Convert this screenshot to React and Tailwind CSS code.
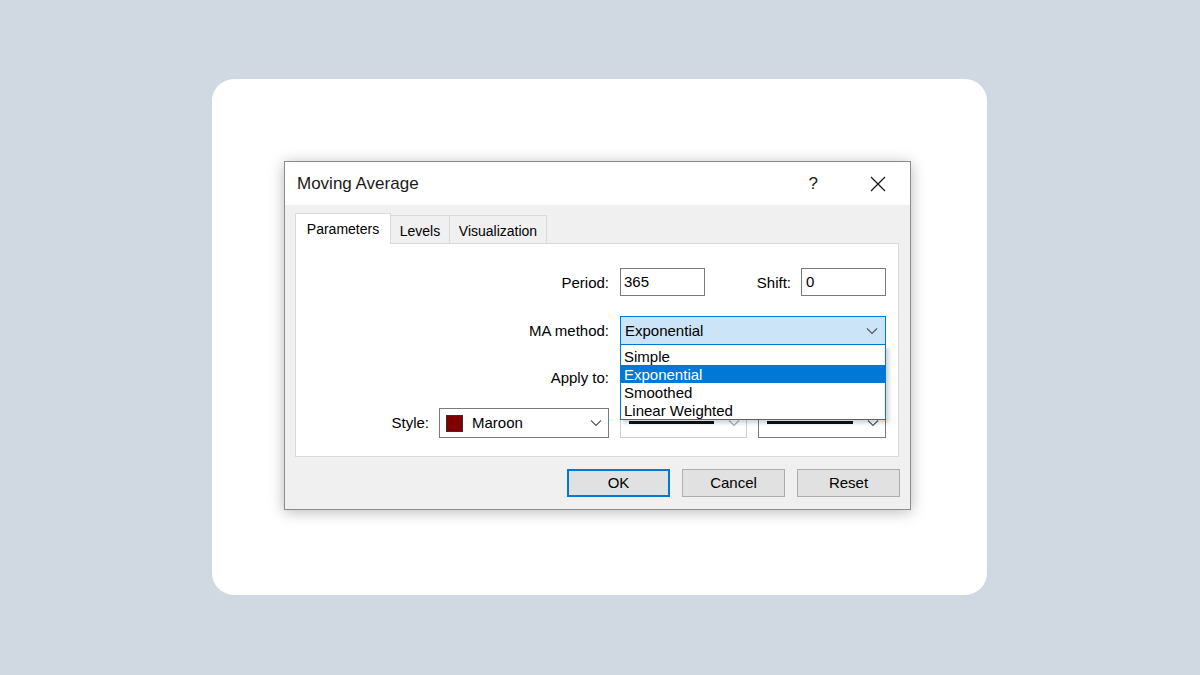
import React from "react";

const font = { fontFamily: '"Liberation Sans", Arial, sans-serif' };

const Chevron = ({ className = "" }) => (
  <svg width="12" height="8" viewBox="0 0 12 8" className={className}>
    <path d="M1 1.5 L6 6.5 L11 1.5" fill="none" stroke="currentColor" strokeWidth="1.1" />
  </svg>
);

const CloseIcon = () => (
  <svg width="16" height="16" viewBox="0 0 16 16">
    <path d="M1 1 L15 15 M15 1 L1 15" stroke="#1a1a1a" strokeWidth="1.3" fill="none" />
  </svg>
);

const options = ["Simple", "Exponential", "Smoothed", "Linear Weighted"];

export default function App() {
  return (
    <div className="w-full h-[675px] bg-[#d0d8e2] pt-[79px] pl-[212px] text-black" style={font}>
      <div className="w-[775px] h-[516px] rounded-[22px] bg-white pt-[82px] pl-[72px]">
        {/* dialog */}
        <div className="w-[627px] h-[349px] border border-[#8c8c8c] bg-[#f0f0f0] shadow-[0_2px_14px_rgba(0,0,0,0.28)] flex flex-col">
          {/* title bar */}
          <div className="h-[43px] bg-white flex items-center pl-[12px] pr-[24px]">
            <span className="text-[17px] text-[#1a1a1a]">Moving Average</span>
            <span className="ml-auto text-[17px] text-[#1a1a1a] mr-[52px]">?</span>
            <CloseIcon />
          </div>

          {/* body */}
          <div className="pl-[10px] pr-[11px] pt-[8px] flex flex-col">
            {/* tabs */}
            <div className="flex items-end h-[30px] text-[14px]">
              <div className="w-[96px] h-[31px] -mb-px relative z-10 bg-white border border-b-0 border-[#d9d9d9] flex items-center justify-center">
                Parameters
              </div>
              <div className="w-[59px] h-[28px] bg-[#f0f0f0] border border-l-0 border-b-0 border-[#d9d9d9] flex items-center justify-center pt-[3px]">
                Levels
              </div>
              <div className="w-[97px] h-[28px] bg-[#f0f0f0] border border-l-0 border-b-0 border-[#d9d9d9] flex items-center justify-center pt-[3px]">
                Visualization
              </div>
            </div>

            {/* panel */}
            <div className="h-[214px] bg-white border border-[#d9d9d9] pt-[24px] flex flex-col text-[15px]">
              {/* period / shift */}
              <div className="flex items-center h-[28px]">
                <span className="w-[313px] text-right pt-[2px]">Period:</span>
                <div className="ml-[11px] w-[85px] h-[28px] border border-[#7a7a7a] flex items-center pl-[3px]">365</div>
                <span className="ml-[10px] w-[76px] text-right pt-[2px]">Shift:</span>
                <div className="ml-[10px] w-[85px] h-[28px] border border-[#7a7a7a] flex items-center pl-[4px]">0</div>
              </div>

              {/* MA method */}
              <div className="flex items-center h-[29px] mt-[20px]">
                <span className="w-[313px] text-right pt-[1px]">MA method:</span>
                <div className="ml-[11px] relative z-20">
                  <div className="w-[266px] h-[29px] bg-[#cce4f7] border border-[#0078d7] flex items-center pl-[4px] pr-[7px] pt-[1px]">
                    <span>Exponential</span>
                    <Chevron className="ml-auto text-[#555]" />
                  </div>
                  <div className="absolute left-0 top-full w-[266px] bg-white border border-t-0 border-[#0078d7] pt-[2px] shadow-[3px_3px_4px_rgba(0,0,0,0.18)]">
                    {options.map((o) => (
                      <div
                        key={o}
                        className={
                          o === "Exponential"
                            ? "h-[18px] leading-[19px] pl-[3px] bg-[#0078d7] text-white"
                            : "h-[18px] leading-[19px] pl-[3px]"
                        }
                      >
                        {o}
                      </div>
                    ))}
                  </div>
                </div>
              </div>

              {/* apply to */}
              <div className="flex items-center h-[29px] mt-[18px]">
                <span className="w-[313px] text-right pt-[1px]">Apply to:</span>
                <div className="ml-[11px] w-[266px] h-[29px] border border-[#7a7a7a] bg-white" />
              </div>

              {/* style row */}
              <div className="flex items-center h-[30px] mt-[16px]">
                <span className="w-[133px] text-right">Style:</span>
                <div className="ml-[10px] w-[170px] h-[30px] border border-[#7a7a7a] flex items-center pl-[6px] pr-[6px]">
                  <span className="w-[17px] h-[17px] bg-[#800000] border border-[#333]" />
                  <span className="ml-[9px]">Maroon</span>
                  <Chevron className="ml-auto text-[#555]" />
                </div>
                <div className="ml-[11px] w-[127px] h-[30px] border border-[#cfcfcf] flex items-center pl-[8px] pr-[6px]">
                  <span className="w-[85px] h-[3px] bg-[#111] -mt-[2px]" />
                  <Chevron className="ml-auto text-[#aaa]" />
                </div>
                <div className="ml-[11px] w-[128px] h-[30px] border border-[#7a7a7a] flex items-center pl-[8px] pr-[6px]">
                  <span className="w-[86px] h-[3px] bg-[#111] -mt-[2px]" />
                  <Chevron className="ml-auto text-[#555]" />
                </div>
              </div>
            </div>

            {/* buttons */}
            <div className="flex justify-end gap-[12px] mt-[12px] mr-[-1px] text-[15px]">
              <button className="w-[103px] h-[28px] bg-[#e1e1e1] border-2 border-[#0078d7] pt-[1px]">OK</button>
              <button className="w-[103px] h-[28px] bg-[#e1e1e1] border border-[#adadad] pt-[1px]">Cancel</button>
              <button className="w-[103px] h-[28px] bg-[#e1e1e1] border border-[#adadad] pt-[1px]">Reset</button>
            </div>
          </div>
        </div>
      </div>
    </div>
  );
}
